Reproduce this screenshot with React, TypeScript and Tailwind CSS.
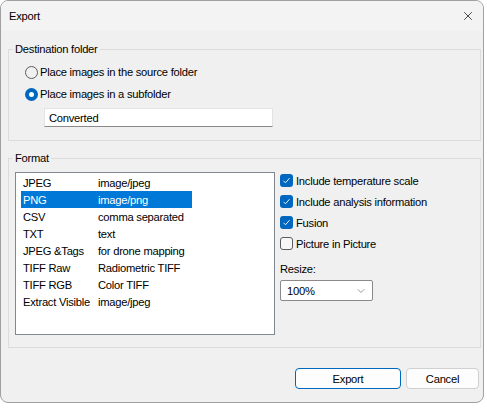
import { ChevronDown, X } from "lucide-react";

const formats = [
  ["JPEG", "image/jpeg"],
  ["PNG", "image/png"],
  ["CSV", "comma separated"],
  ["TXT", "text"],
  ["JPEG &Tags", "for drone mapping"],
  ["TIFF Raw", "Radiometric TIFF"],
  ["TIFF RGB", "Color TIFF"],
  ["Extract Visible", "image/jpeg"],
];

const options = [
  { label: "Include temperature scale", checked: true },
  { label: "Include analysis information", checked: true },
  { label: "Fusion", checked: true },
  { label: "Picture in Picture", checked: false },
];

function Radio({ checked, label }: { checked: boolean; label: string }) {
  return (
    <div className="flex h-[22px] items-center gap-[2px]">
      {checked ? (
        <span className="flex h-[13px] w-[13px] items-center justify-center rounded-full bg-[#0067c0]">
          <span className="h-[5px] w-[5px] rounded-full bg-white" />
        </span>
      ) : (
        <span className="h-[13px] w-[13px] rounded-full border border-[#5c5c5c]" />
      )}
      <span>{label}</span>
    </div>
  );
}

function Check({ checked, label }: { checked: boolean; label: string }) {
  return (
    <div className="flex h-[21px] items-center gap-[3px]">
      {checked ? (
        <span className="flex h-[13px] w-[13px] items-center justify-center rounded-[3px] bg-[#0067c0]">
          <svg width="9" height="9" viewBox="0 0 9 9" fill="none">
            <path d="M1.5 4.8l2 2 4-4.6" stroke="white" strokeWidth="0.9" />
          </svg>
        </span>
      ) : (
        <span className="h-[13px] w-[13px] rounded-[3px] border border-[#5c5c5c] bg-[#f7f7f7]" />
      )}
      <span>{label}</span>
    </div>
  );
}

export default function App() {
  return (
    <div className="h-[409px] w-[487px] whitespace-nowrap bg-white font-['Liberation_Sans',Arial,sans-serif] text-[11.2px] leading-[16px] tracking-[-0.25px] text-black">
      <div className="flex h-[403px] w-[484px] flex-col overflow-hidden rounded-[8px] border border-[#a0a0a0] bg-[#f0f0f0]">
        <div className="flex h-[30px] shrink-0 items-center justify-between bg-[#f3f3f3] pl-[8px] pr-[8px]">
          <span>Export</span>
          <X size={14} strokeWidth={1.2} />
        </div>

        <fieldset className="ml-[7px] mt-[10px] h-[100px] w-[473px] border border-[#dcdcdc]">
          <legend className="ml-[4px] px-[2px]">Destination folder</legend>
          <div className="pl-[16px] pt-[4px]">
            <Radio checked={false} label="Place images in the source folder" />
            <Radio checked label="Place images in a subfolder" />
          </div>
          <div className="ml-[35px] mt-[3px] flex h-[19px] w-[229px] items-center border border-[#e3e3e3] border-b-[#8a8a8a] bg-white pl-[4px]">
            Converted
          </div>
        </fieldset>

        <fieldset className="ml-[7px] mt-[9px] h-[198px] w-[473px] border border-[#dcdcdc]">
          <legend className="ml-[4px] px-[2px]">Format</legend>
          <div className="flex gap-[5px] pl-[6px] pt-[4px]">
            <div className="mt-[2px] h-[163px] w-[260px] shrink-0 border border-[#828790] bg-white pt-[1px]">
              {formats.map(([name, kind], i) => (
                <div
                  key={name}
                  className={`ml-[5px] flex h-[17px] w-[171px] items-center pl-[2px] ${
                    i === 1 ? "bg-[#0078d7] text-white" : ""
                  }`}
                >
                  <span className="w-[75px] shrink-0">{name}</span>
                  <span>{kind}</span>
                </div>
              ))}
            </div>

            <div className="flex flex-col">
              {options.map((o) => (
                <Check key={o.label} checked={o.checked} label={o.label} />
              ))}
              <div className="mt-[7px]">Resize:</div>
              <div className="mt-[3px] flex h-[21px] w-[93px] items-center justify-between rounded-[2px] border border-[#8a8a8a] bg-white pl-[6px] pr-[5px]">
                <span>100%</span>
                <ChevronDown size={12} strokeWidth={1.2} className="text-[#555]" />
              </div>
            </div>
          </div>
        </fieldset>

        <div className="mt-[20px] flex justify-end gap-[5px] pr-[4px]">
          <button className="h-[21px] w-[106px] rounded-[4px] border border-[#0067c0] bg-[#fdfdfd]">Export</button>
          <button className="h-[21px] w-[73px] rounded-[4px] border border-[#d0d0d0] bg-[#fdfdfd]">Cancel</button>
        </div>
      </div>
    </div>
  );
}
